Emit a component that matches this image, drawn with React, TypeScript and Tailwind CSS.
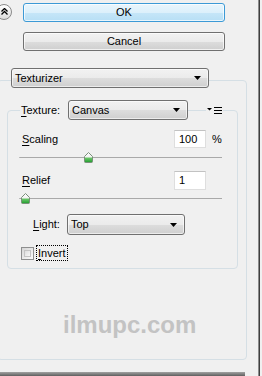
import React from "react";

const font = "font-['Liberation_Sans','Arial',sans-serif]";

function Arrow() {
  return (
    <svg width="7" height="4" viewBox="0 0 7 4">
      <path d="M0 0H7L3.5 4Z" fill="#000" />
    </svg>
  );
}

function Combo({ label, className }: { label: string; className: string }) {
  return (
    <div
      className={`flex shrink-0 items-center justify-between rounded-[3px] border border-[#707070] bg-[linear-gradient(#f2f2f2_0%,#ebebeb_50%,#dddddd_51%,#cfcfcf_100%)] pl-[3px] pr-[7px] shadow-[inset_0_0_0_1px_rgba(255,255,255,0.6)] ${className}`}
    >
      <span>{label}</span>
      <Arrow />
    </div>
  );
}

function Field({ value, className }: { value: string; className: string }) {
  return (
    <div
      className={`shrink-0 border border-[#dedede] border-t-[#c2c2c2] bg-white pl-[4px] ${className}`}
    >
      {value}
    </div>
  );
}

function Thumb({ className }: { className: string }) {
  return (
    <svg className={`absolute top-[1px] ${className}`} width="9" height="11" viewBox="0 0 9 11">
      <defs>
        <linearGradient id="thumbFill" x1="0" y1="0" x2="0" y2="1">
          <stop offset="0" stopColor="#ffffff" />
          <stop offset="0.45" stopColor="#f2f2f2" />
          <stop offset="0.55" stopColor="#6cc86a" />
          <stop offset="1" stopColor="#1e9b2c" />
        </linearGradient>
      </defs>
      <path
        d="M4.5 0.5L8.5 4.5V9.5Q8.5 10.5 7.5 10.5H1.5Q0.5 10.5 0.5 9.5V4.5Z"
        fill="url(#thumbFill)"
        stroke="#7a8f7a"
      />
    </svg>
  );
}

function Slider({ thumb }: { thumb: string }) {
  return (
    <div className="relative ml-[11px] h-[12px] w-[203px] pt-[6px]">
      <div className="h-[2px] rounded-l-[2px] border-t border-[#a9a9a9] border-b-white" />
      <Thumb className={thumb} />
    </div>
  );
}

function MenuIcon() {
  return (
    <svg width="15" height="8" viewBox="0 0 15 8">
      <path d="M0 2H5L2.5 4.5Z" fill="#000" />
      <rect x="7" y="1" width="8" height="1" fill="#000" />
      <rect x="7" y="4" width="8" height="1" fill="#000" />
      <rect x="7" y="7" width="8" height="1" fill="#000" />
    </svg>
  );
}

function CollapseIcon() {
  return (
    <div className="-ml-[4px] mt-[1px] flex h-[16px] w-[16px] shrink-0 items-center justify-center rounded-full border border-[#8a8a8a] bg-[linear-gradient(#ffffff,#dcdcdc)] pb-[2px] pl-[1px]">
      <svg width="7" height="7" viewBox="0 0 7 7">
        <path d="M0.5 3.5L3.5 0.5L6.5 3.5M0.5 6.5L3.5 3.5L6.5 6.5" stroke="#000" strokeWidth="1.3" fill="none" />
      </svg>
    </div>
  );
}

export default function App() {
  return (
    <div className={`flex h-[376px] w-[262px] overflow-hidden bg-[#f0f0f0] text-[11px] leading-[13px] text-black ${font}`}>
      <div className="flex w-[258px] shrink-0 flex-col">
        <div className="mt-[3px] flex items-start">
          <CollapseIcon />
          <button className="ml-[11px] h-[19px] w-[202px] rounded-[3px] border border-[#3c9ad6] bg-[linear-gradient(#e9f5fc_0%,#dcf0fb_50%,#c6e6f8_51%,#b7dff5_100%)] shadow-[inset_0_0_0_1px_rgba(255,255,255,0.7)]">
            OK
          </button>
        </div>
        <button className="ml-[23px] mt-[10px] h-[20px] w-[202px] rounded-[3px] border border-[#707070] bg-[linear-gradient(#f2f2f2_0%,#ebebeb_50%,#dddddd_51%,#cfcfcf_100%)] shadow-[inset_0_0_0_1px_rgba(255,255,255,0.7)]">
          Cancel
        </button>

        <div className="-ml-[3px] mt-[29px] flex h-[280px] w-[250px] shrink-0 flex-col rounded-[4px] border border-[#d5dfe5]">
          <div className="-mt-[13px] ml-[13px]">
            <Combo label="Texturizer" className="h-[20px] w-[198px]" />
          </div>

          <div className="ml-[9px] mt-[22px] w-[231px] rounded-[4px] border border-[#d5dfe5] pb-[7px]">
            <div className="-mt-[11px] flex h-[20px] items-center">
              <span className="ml-[12px] w-[48px] bg-[#f0f0f0] pl-[1px]">
                <span className="underline underline-offset-2">T</span>exture:
              </span>
              <Combo label="Canvas" className="h-[20px] w-[120px]" />
              <span className="ml-[18px] flex bg-[#f0f0f0] px-[1px]">
                <MenuIcon />
              </span>
            </div>

            <div className="mt-[10px] flex h-[18px] items-center">
              <span className="ml-[14px] flex-1">
                <span className="underline underline-offset-2">S</span>caling
              </span>
              <Field value="100" className="h-[18px] w-[32px] leading-[16px]" />
              <span className="ml-[6px] mr-[13px] w-[12px]">%</span>
            </div>
            <div className="mt-[3px]">
              <Slider thumb="left-[65px]" />
            </div>

            <div className="mt-[8px] flex h-[19px] items-center">
              <span className="ml-[14px] flex-1">
                <span className="underline underline-offset-2">R</span>elief
              </span>
              <Field value="1" className="mr-[31px] h-[19px] w-[32px] leading-[17px]" />
            </div>
            <div className="mt-[2px]">
              <Slider thumb="left-[2px]" />
            </div>

            <div className="mt-[10px] flex h-[21px] items-center">
              <span className="ml-[25px] w-[34px]">
                <span className="underline underline-offset-2">L</span>ight:
              </span>
              <Combo label="Top" className="h-[21px] w-[118px]" />
            </div>

            <div className="mt-[10px] flex h-[16px] items-center">
              <div className="ml-[13px] h-[13px] w-[13px] border border-[#8e8f8f] bg-[linear-gradient(135deg,#d6d6d6,#fbfbfb)] p-[2px]">
                <div className="h-full w-full border border-[#c4c4c4] bg-[linear-gradient(135deg,#dedede,#f7f7f7)]" />
              </div>
              <span className="ml-[2px] h-[16px] border border-dotted border-black px-[1px] leading-[14px]">
                <span className="underline underline-offset-2">I</span>nvert
              </span>
            </div>
          </div>

          <div className="ml-[65px] mt-[44px] text-[24px] font-bold leading-[24px] text-[#c3c3c3]">
            ilmupc.com
          </div>
        </div>

        <div className="mt-[12px] h-[4px] w-[245px] shrink-0 bg-[linear-gradient(#a2a2a2,#5f5f5f)]" />
      </div>
      <div className="w-px shrink-0 bg-[#8c8c8c]" />
      <div className="w-px shrink-0 bg-[#3f3f3f]" />
    </div>
  );
}
